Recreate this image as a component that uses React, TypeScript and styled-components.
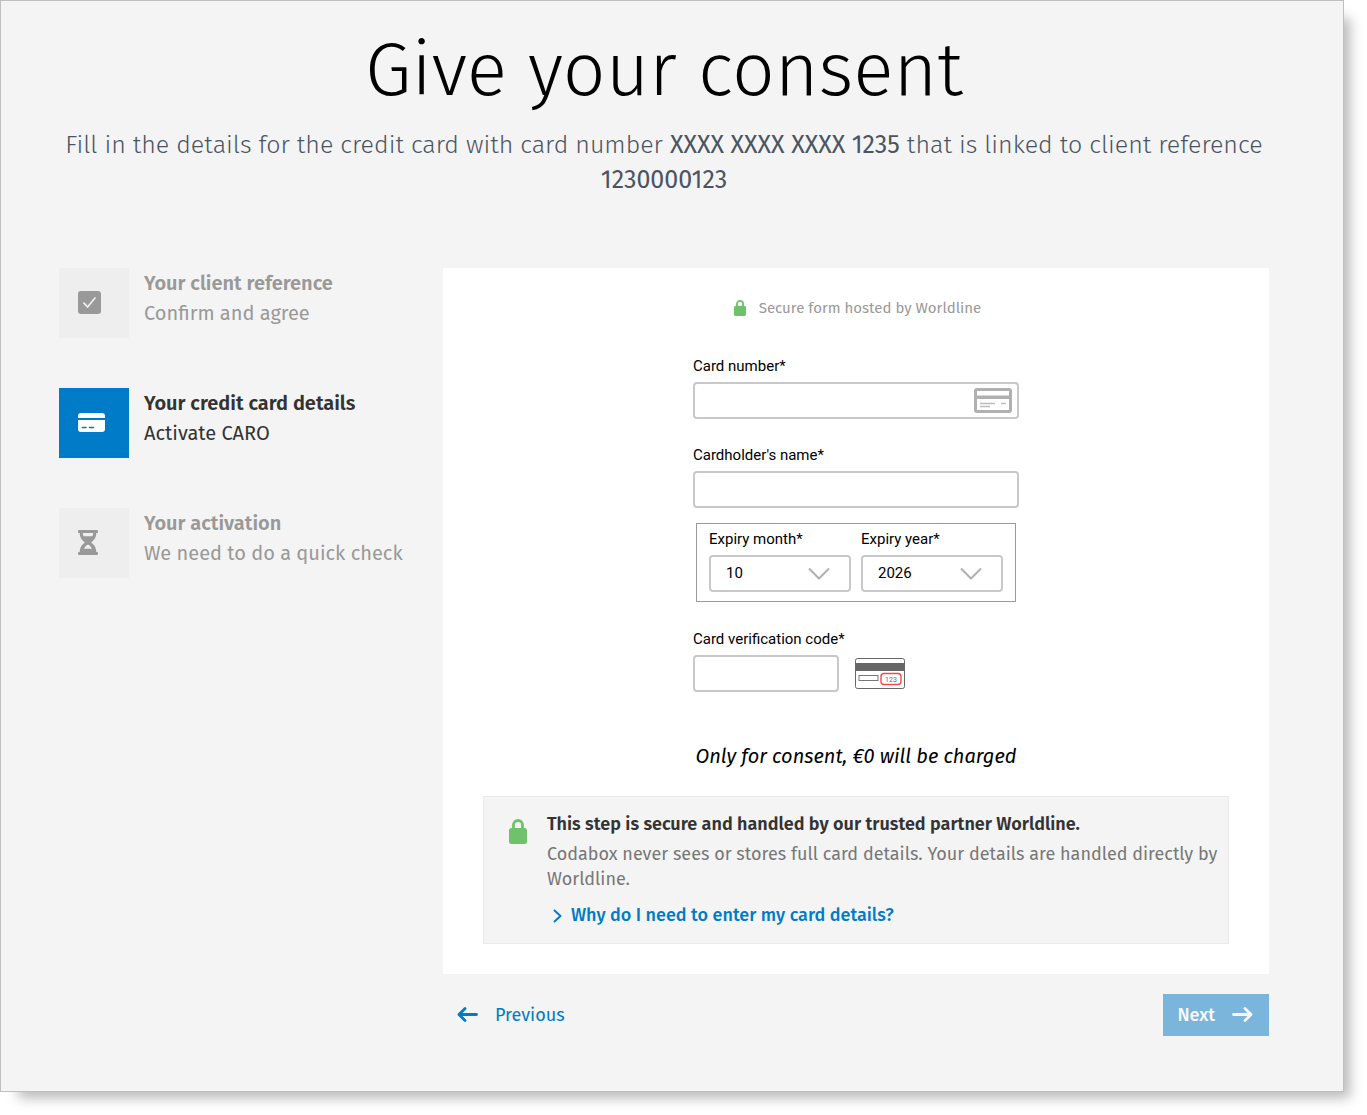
import React from "react";
import styled, { createGlobalStyle } from "styled-components";

const humanist = `"Fira Sans", "Open Sans", "Noto Sans", sans-serif`;
const formFont = `Roboto, "Liberation Sans", sans-serif`;

const color = {
  page: "#f4f4f4",
  tile: "#eeeeee",
  blue: "#007bc7",
  green: "#6dc26b",
  ink: "#333333",
  muted: "#999999",
  body: "#777777",
  slate: "#4a5462",
  line: "#c8c8c8",
};

const GlobalStyle = createGlobalStyle`
  *, *::before, *::after { box-sizing: border-box; }
  body { margin: 0; background: #ffffff; font-family: ${humanist}; color: ${color.ink}; }
  svg { display: block; flex: none; }
`;

const Frame = styled.div`
  margin: 0 23px 23px 0;
  padding: 24px 74px 55px 58px;
  background: ${color.page};
  border: 1px solid #c0c0c0;
  box-shadow: 12px 12px 12px -6px rgba(0, 0, 0, 0.28);
`;

const Header = styled.header`
  margin-bottom: 70px;
  text-align: center;
`;

const Title = styled.h1`
  margin: 0 0 13px;
  font-size: 75px;
  font-weight: 300;
  line-height: 90px;
  color: #000000;
`;

const Lead = styled.p`
  margin: 0;
  font-size: 25px;
  font-weight: 300;
  line-height: 35px;
  color: ${color.slate};

  strong {
    font-weight: 400;
  }
`;

const Columns = styled.div`
  display: grid;
  grid-template-columns: 364px minmax(0, 1fr);
  column-gap: 20px;
`;

const Steps = styled.ol`
  display: flex;
  flex-direction: column;
  gap: 50px;
  margin: 0;
  padding: 0;
  list-style: none;
`;

const StepItem = styled.li<{ $active?: boolean }>`
  display: flex;
  gap: 15px;
  font-size: 20px;
  line-height: 30px;
  color: ${(p) => (p.$active ? color.ink : color.muted)};
`;

const StepTile = styled.div<{ $active?: boolean }>`
  display: flex;
  align-items: center;
  flex: none;
  width: 70px;
  height: 70px;
  padding: 0 0 2px 19px;
  color: ${(p) => (p.$active ? "#ffffff" : color.muted)};
  background: ${(p) => (p.$active ? color.blue : color.tile)};
`;

const StepName = styled.div`
  font-weight: 600;
`;

const StepHint = styled.div`
  white-space: nowrap;
`;

const Card = styled.section`
  display: flex;
  flex-direction: column;
  align-items: center;
  padding: 30px 40px;
  background: #ffffff;
`;

const SecureNote = styled.p`
  display: flex;
  align-items: center;
  gap: 13px;
  margin: 0 0 37px;
  padding-left: 3px;
  font-size: 15px;
  line-height: 20px;
  color: ${color.muted};
`;

const Form = styled.form`
  display: flex;
  flex-direction: column;
  width: 326px;
  font-family: ${formFont};
  font-size: 15px;
  color: #000000;
`;

const Field = styled.div<{ $after?: number }>`
  margin-bottom: ${(p) => p.$after ?? 0}px;
`;

const Label = styled.label`
  display: block;
  margin-bottom: 5px;
  line-height: 22px;
`;

const InputShell = styled.div`
  position: relative;
`;

const Input = styled.input<{ $width?: string }>`
  display: block;
  width: ${(p) => p.$width ?? "100%"};
  height: 37px;
  padding: 0 15px;
  font: inherit;
  color: #000000;
  background: #ffffff;
  border: 2px solid ${color.line};
  border-radius: 4px;
`;

const InputIcon = styled.span`
  position: absolute;
  top: 6px;
  right: 7px;
  pointer-events: none;
`;

const Expiry = styled.fieldset`
  display: grid;
  grid-template-columns: 1fr 1fr;
  gap: 10px;
  min-width: 0;
  margin: 0 3px 26px;
  padding: 4px 12px 9px;
  border: 1px solid #999999;
`;

const Select = styled.select`
  display: block;
  width: 100%;
  height: 37px;
  padding: 0 15px 1px;
  font: inherit;
  color: #000000;
  appearance: none;
  background: #ffffff;
  border: 2px solid ${color.line};
  border-radius: 4px;
`;

const SelectArrow = styled.span`
  position: absolute;
  top: 12px;
  right: 20px;
  pointer-events: none;
`;

const CodeRow = styled.div`
  display: flex;
  align-items: center;
  gap: 16px;
`;

const ChargeNote = styled.p`
  margin: 49px 0 25px;
  font-size: 20px;
  font-style: italic;
  line-height: 30px;
  color: #000000;
`;

const Info = styled.aside`
  display: flex;
  gap: 20px;
  width: 100%;
  padding: 15px 4px 15px 25px;
  font-size: 18px;
  line-height: 25px;
  background: ${color.page};
  border: 1px solid #ebebeb;
`;

const InfoIcon = styled.div`
  padding-top: 7px;
`;

const InfoTitle = styled.h2`
  margin: 0 0 5px;
  font-size: inherit;
  font-weight: 600;
`;

const InfoText = styled.p`
  margin: 0 0 11px;
  color: ${color.body};
`;

const InfoLink = styled.a`
  display: flex;
  align-items: center;
  gap: 9px;
  padding-left: 6px;
  font-weight: 500;
  color: ${color.blue};
  text-decoration: none;
`;

const Actions = styled.nav`
  display: flex;
  justify-content: space-between;
  margin-top: 20px;
`;

const ActionButton = styled.button<{ $primary?: boolean }>`
  display: flex;
  align-items: center;
  gap: 17px;
  height: 42px;
  padding: 0 16px 1px 14px;
  font-family: inherit;
  font-size: 18px;
  font-weight: ${(p) => (p.$primary ? 500 : 400)};
  color: ${(p) => (p.$primary ? "#f9f9f9" : color.blue)};
  background: ${(p) => (p.$primary ? "#7ab6dc" : "transparent")};
  border: 0;
`;

const CheckIcon = () => (
  <svg width="23" height="23" viewBox="0 0 23 23" aria-hidden="true">
    <rect width="23" height="23" rx="3" fill="currentColor" />
    <path d="M6 12.2 L9.6 16 L17 7" fill="none" stroke={color.tile} strokeWidth="1.8" strokeLinecap="round" strokeLinejoin="round" />
  </svg>
);

const CreditCardIcon = () => (
  <svg width="27" height="19" viewBox="0 0 27 19" aria-hidden="true">
    <path d="M0 5V3a3 3 0 0 1 3-3h21a3 3 0 0 1 3 3v2z" fill="currentColor" />
    <path d="M0 7h27v9a3 3 0 0 1-3 3H3a3 3 0 0 1-3-3z" fill="currentColor" />
    <path d="M4.5 14.5h3.5M11.5 14.5h4" stroke={color.blue} strokeWidth="1.6" strokeLinecap="round" />
  </svg>
);

const HourglassIcon = () => (
  <svg width="20" height="25" viewBox="0 0 20 25" aria-hidden="true">
    <path
      fill="currentColor"
      fillRule="evenodd"
      d="M1 0h18a1 1 0 0 1 1 1v1a1 1 0 0 1-1 1h-.7c0 4.500-2.300 7.500-5.300 9.500 3 2 5.300 5 5.300 9.500h.7a1 1 0 0 1 1 1v1a1 1 0 0 1-1 1H1a1 1 0 0 1-1-1v-1a1 1 0 0 1 1-1h.7c0-4.500 2.300-7.500 5.300-9.500C4 10.500 1.700 7.500 1.700 3H1a1 1 0 0 1-1-1V1a1 1 0 0 1 1-1zM4.800 3c.1 1.200.4 2.200.8 3.200h8.800c.4-1 .7-2 .8-3.200zM6 18.800h8C13.200 17 11.800 15.600 10 14.600 8.200 15.600 6.800 17 6 18.800z"
    />
  </svg>
);

const LockIcon = ({ width, height }: { width: number; height: number }) => (
  <svg width={width} height={height} viewBox="0 0 18 25" preserveAspectRatio="none" aria-hidden="true">
    <path d="M4.5 11V6a4.5 4.5 0 0 1 9 0v5" fill="none" stroke={color.green} strokeWidth="2.8" />
    <rect y="9" width="18" height="16" rx="2.5" fill={color.green} />
  </svg>
);

const OutlineCardIcon = () => (
  <svg width="38" height="25" viewBox="0 0 38 25" aria-hidden="true">
    <rect x="1.5" y="1.5" width="35" height="22" rx="1.5" fill="#ffffff" stroke="#b0b0b0" strokeWidth="3" />
    <path d="M2 9.2h34" stroke="#b0b0b0" strokeWidth="3.6" />
    <path d="M6 15.5h15M27 15.5h5M6 18.5h10" stroke="#bdbdbd" strokeWidth="1.3" />
  </svg>
);

const ChevronDown = () => (
  <svg width="24" height="13" viewBox="0 0 24 13" aria-hidden="true">
    <path d="M2 1.5 L12 11.5 L22 1.5" fill="none" stroke="#b0b0b0" strokeWidth="2" />
  </svg>
);

const CodeCardIcon = () => (
  <svg width="50" height="31" viewBox="0 0 50 31" role="img" aria-label="Code on the back of the card">
    <rect x=".5" y=".5" width="49" height="30" rx="2" fill="#ffffff" stroke="#666666" />
    <rect x="0" y="5" width="50" height="8" fill="#666666" />
    <rect x="4" y="17.5" width="19" height="5" fill="#ffffff" stroke="#777777" />
    <rect x="26" y="15.5" width="20" height="11" rx="3" fill="#ffffff" stroke="#ee4c4c" strokeWidth="1.4" />
    <text x="36" y="23.5" textAnchor="middle" fontFamily="Roboto, sans-serif" fontSize="7" fill="#666666">
      123
    </text>
  </svg>
);

const ChevronRight = () => (
  <svg width="9" height="14" viewBox="0 0 9 14" aria-hidden="true">
    <path d="M1.5 1.5 L7.5 7 L1.5 12.5" fill="none" stroke="currentColor" strokeWidth="2" strokeLinecap="round" strokeLinejoin="round" />
  </svg>
);

const Arrow = ({ back }: { back?: boolean }) => (
  <svg width="21" height="15" viewBox="0 0 21 15" aria-hidden="true">
    <path
      d={back ? "M8 1.5 L2 7.5 L8 13.5 M2 7.5 H19.5" : "M13 1.5 L19 7.5 L13 13.5 M19 7.5 H1.5"}
      fill="none"
      stroke="currentColor"
      strokeWidth="2.8"
      strokeLinecap="round"
      strokeLinejoin="round"
    />
  </svg>
);

const steps = [
  { name: "Your client reference", hint: "Confirm and agree", icon: <CheckIcon />, active: false },
  { name: "Your credit card details", hint: "Activate CARO", icon: <CreditCardIcon />, active: true },
  { name: "Your activation", hint: "We need to do a quick check", icon: <HourglassIcon />, active: false },
];

const months = ["01", "02", "03", "04", "05", "06", "07", "08", "09", "10", "11", "12"];
const years = ["2025", "2026", "2027", "2028", "2029", "2030"];

export default function App() {
  return (
    <>
      <GlobalStyle />
      <Frame>
        <Header>
          <Title>Give your consent</Title>
          <Lead>
            Fill in the details for the credit card with card number <strong>XXXX XXXX XXXX 1235</strong> that is
            linked to client reference <strong>1230000123</strong>
          </Lead>
        </Header>

        <Columns>
          <Steps>
            {steps.map((step) => (
              <StepItem key={step.name} $active={step.active} aria-current={step.active ? "step" : undefined}>
                <StepTile $active={step.active}>{step.icon}</StepTile>
                <div>
                  <StepName>{step.name}</StepName>
                  <StepHint>{step.hint}</StepHint>
                </div>
              </StepItem>
            ))}
          </Steps>

          <main>
            <Card>
              <SecureNote>
                <LockIcon width={12} height={16} />
                Secure form hosted by Worldline
              </SecureNote>

              <Form id="card-form" onSubmit={(e) => e.preventDefault()}>
                <Field $after={25}>
                  <Label htmlFor="card-number">Card number*</Label>
                  <InputShell>
                    <Input id="card-number" inputMode="numeric" />
                    <InputIcon>
                      <OutlineCardIcon />
                    </InputIcon>
                  </InputShell>
                </Field>

                <Field $after={15}>
                  <Label htmlFor="card-name">Cardholder's name*</Label>
                  <Input id="card-name" />
                </Field>

                <Expiry>
                  <Field>
                    <Label htmlFor="month">Expiry month*</Label>
                    <InputShell>
                      <Select id="month" defaultValue="10">
                        {months.map((m) => (
                          <option key={m}>{m}</option>
                        ))}
                      </Select>
                      <SelectArrow>
                        <ChevronDown />
                      </SelectArrow>
                    </InputShell>
                  </Field>
                  <Field>
                    <Label htmlFor="year">Expiry year*</Label>
                    <InputShell>
                      <Select id="year" defaultValue="2026">
                        {years.map((y) => (
                          <option key={y}>{y}</option>
                        ))}
                      </Select>
                      <SelectArrow>
                        <ChevronDown />
                      </SelectArrow>
                    </InputShell>
                  </Field>
                </Expiry>

                <Field>
                  <Label htmlFor="code">Card verification code*</Label>
                  <CodeRow>
                    <Input id="code" $width="146px" inputMode="numeric" />
                    <CodeCardIcon />
                  </CodeRow>
                </Field>
              </Form>

              <ChargeNote>Only for consent, €0 will be charged</ChargeNote>

              <Info>
                <InfoIcon>
                  <LockIcon width={18} height={25} />
                </InfoIcon>
                <div>
                  <InfoTitle>This step is secure and handled by our trusted partner Worldline.</InfoTitle>
                  <InfoText>
                    Codabox never sees or stores full card details. Your details are handled directly by Worldline.
                  </InfoText>
                  <InfoLink href="#why">
                    <ChevronRight />
                    Why do I need to enter my card details?
                  </InfoLink>
                </div>
              </Info>
            </Card>

            <Actions>
              <ActionButton type="button">
                <Arrow back />
                Previous
              </ActionButton>
              <ActionButton type="submit" form="card-form" $primary>
                Next
                <Arrow />
              </ActionButton>
            </Actions>
          </main>
        </Columns>
      </Frame>
    </>
  );
}
